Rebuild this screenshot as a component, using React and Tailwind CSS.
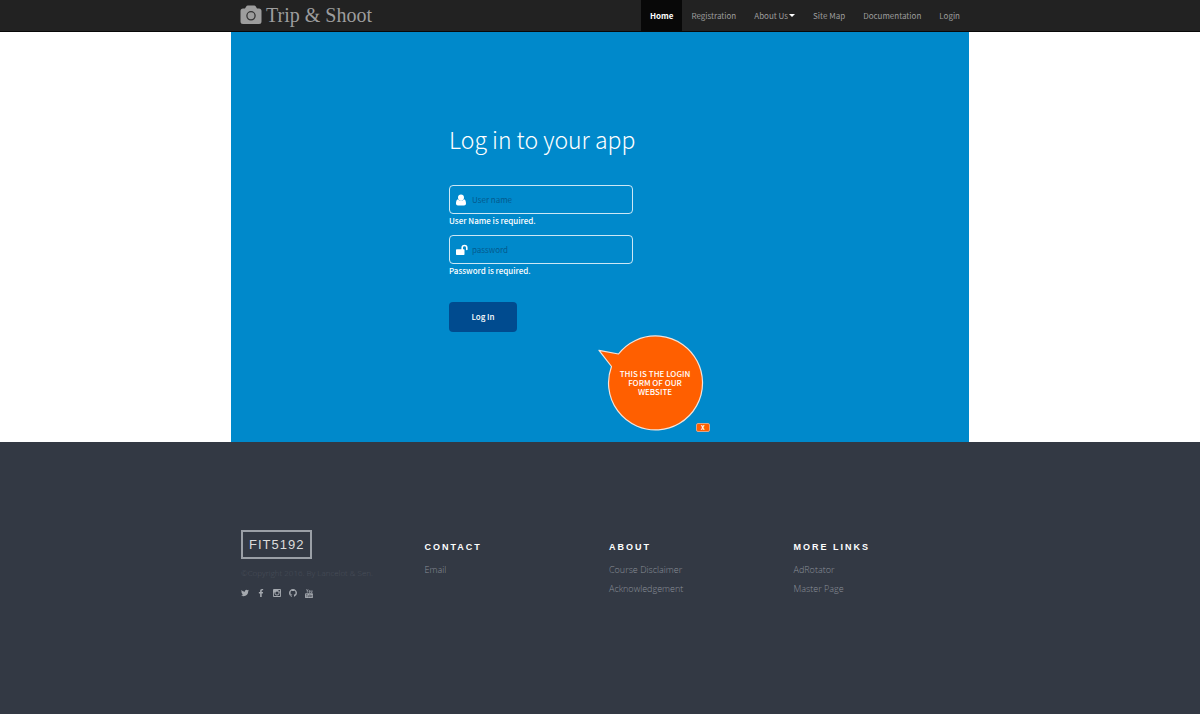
import React from "react";
import { FaTwitter, FaFacebookF } from "react-icons/fa";

const navLinks = ["Registration", "About Us", "Site Map", "Documentation", "Login"];

const columns = [
  { title: "CONTACT", links: ["Email"] },
  { title: "ABOUT", links: ["Course Disclaimer", "Acknowledgement"] },
  { title: "MORE LINKS", links: ["AdRotator", "Master Page"] },
];

function CameraIcon() {
  return (
    <svg viewBox="0 0 22 20" className="h-5 w-[22px]" aria-hidden="true">
      <path fill="#9d9d9d" d="M3 3.500h2L6.200 1.500Q6.700 0.500 7.800 0.500h6.400q1.100 0 1.600 1L17 3.500h2q2.500 0 2.500 2.500v10.500q0 2.500-2.500 2.500H3Q.5 19 .5 16.500V6Q.5 3.500 3 3.500z" />
      <circle cx="11" cy="10.800" r="4.100" fill="none" stroke="#333" strokeWidth="1.300" />
    </svg>
  );
}

function UserIcon() {
  return (
    <svg viewBox="0 0 10 12" className="h-3 w-[10px]" fill="#fff" aria-hidden="true">
      <path d="M5 .5c1.800 0 3 1.300 3 3.100S6.800 7 5 7 2 5.400 2 3.600 3.200.5 5 .5z" />
      <path d="M2 5.200C3.500 7.400 6.500 7.400 8 5.200c1.500.4 2 2.400 2 4.400 0 1.200-.8 1.900-1.900 1.900H1.900C.8 11.500 0 10.800 0 9.600c0-2 .5-4 2-4.400z" />
    </svg>
  );
}

function UnlockIcon() {
  return (
    <svg viewBox="0 0 12 12" className="h-3 w-3" aria-hidden="true">
      <path d="M6.200 6V3.800a2.300 2.300 0 0 1 4.600 0v1.700" fill="none" stroke="#fff" strokeWidth="1.600" strokeLinecap="round" />
      <rect x="0" y="5.200" width="8.500" height="5.800" rx=".7" fill="#fff" />
    </svg>
  );
}

function InstagramIcon() {
  return (
    <svg viewBox="0 0 1536 1536" className="size-2" fill="currentColor" aria-hidden="true">
      <path fillRule="evenodd" d="M178 0h1180q178 0 178 178v1180q0 178-178 178H178Q0 1536 0 1358V178Q0 0 178 0zM1362 1302V650h-136q20 63 20 131 0 190-140 323t-338 133-338-133-140-323q0-68 20-131H170v652q0 60 60 60h1072q60 0 60-60zM768 462a308 300 0 1 0 0 600 308 300 0 1 0 0-600zM1110 170q-66 0-66 66v166q0 66 66 66h184q68 0 68-66V236q0-66-68-66z" />
    </svg>
  );
}

function GithubIcon() {
  return (
    <svg viewBox="0 0 16 16" className="size-2" fill="currentColor" aria-hidden="true">
      <path d="M8 0C3.580 0 0 3.580 0 8c0 3.540 2.290 6.530 5.470 7.590.4.070.55-.17.55-.38 0-.19-.01-.82-.01-1.490-2.010.37-2.530-.49-2.690-.94-.09-.23-.48-.94-.82-1.130-.28-.15-.68-.52-.01-.53.63-.01 1.080.58 1.230.82.72 1.210 1.870.87 2.330.66.07-.52.28-.87.51-1.070-1.780-.2-3.640-.89-3.640-3.950 0-.87.31-1.590.82-2.150-.08-.2-.36-1.020.08-2.120 0 0 .67-.21 2.200.82a7.600 7.600 0 0 1 4 0c1.530-1.040 2.200-.82 2.200-.82.44 1.100.16 1.920.08 2.120.51.56.82 1.270.82 2.150 0 3.070-1.870 3.750-3.650 3.950.29.25.54.73.54 1.480 0 1.070-.01 1.930-.01 2.200 0 .21.15.46.55.38A8 8 0 0 0 16 8c0-4.420-3.580-8-8-8z" />
    </svg>
  );
}

function YoutubeIcon() {
  return (
    <svg viewBox="0 0 14 16" className="h-[9px] w-2" aria-hidden="true">
      <path d="M2.500.5 4 3.500 5.500.5M4 3.500V6.500M7.200 3v3h1.300V3zM10.500 2.500V6h2V2.500" fill="none" stroke="currentColor" strokeWidth="1.300" />
      <rect x="0" y="7.500" width="14" height="8.500" rx="1.500" fill="currentColor" />
      <path d="M1.500 9.500h3M3 9.500v5M5.500 11v3h1.500v-3M8.500 9v5h1.200v-2.800H8.500M12.800 13.800h-1.500v-2.500h1.300v1.200" fill="none" stroke="#333944" strokeWidth=".8" />
    </svg>
  );
}

const socials = [
  { name: "Twitter", icon: <FaTwitter className="size-2" /> },
  { name: "Facebook", icon: <FaFacebookF className="size-2" /> },
  { name: "Instagram", icon: <InstagramIcon /> },
  { name: "GitHub", icon: <GithubIcon /> },
  { name: "YouTube", icon: <YoutubeIcon /> },
];

function Field({ id, type, placeholder, icon, error }) {
  return (
    <div className="mb-2 flex flex-col">
      <div className="relative">
        <span className="pointer-events-none absolute inset-y-0 left-[7px] flex items-center">{icon}</span>
        <input
          id={id}
          type={type}
          placeholder={placeholder}
          aria-label={placeholder}
          aria-describedby={`${id}-error`}
          className="block h-[29px] w-full rounded-[4px] border border-white/80 bg-transparent pr-2 pl-[22px] text-[8px] text-white placeholder:text-[#045a8d] focus:outline-none"
        />
      </div>
      <p id={`${id}-error`} className="text-[8px] leading-[13px] font-medium text-white">{error}</p>
    </div>
  );
}

function SpeechBubble() {
  return (
    <aside className="relative h-[97px] w-[113px]">
      <svg viewBox="0 0 113 97" className="h-full w-full" aria-hidden="true">
        <path d="M1 15.300 20.500 19A47 47 0 1 1 13.500 31.500Z" fill="#ff5f00" stroke="#f3e3da" strokeWidth="1.200" strokeLinejoin="round" />
      </svg>
      <p className="absolute top-[34px] left-[17px] w-20 text-center text-[8px] leading-[9px] font-medium text-white">
        THIS IS THE LOGIN FORM OF OUR WEBSITE
      </p>
      <button type="button" className="absolute right-px bottom-0 flex h-[9px] w-[14px] items-center justify-center rounded-[2px] border border-[#d9a58a] bg-[#ff5f00] text-[6px] leading-[7px] font-bold text-white">
        X
      </button>
    </aside>
  );
}

export default function App() {
  return (
    <div className="flex min-h-screen flex-col bg-white font-['Noto_Sans_CJK_SC',sans-serif]">
      <header className="border-b border-[#080808] bg-[#222]">
        <div className="mx-auto flex h-[31px] max-w-[738px] items-stretch justify-between pl-[9px]">
          <a href="#home" className="flex items-center gap-1 pb-[2px] font-['Liberation_Serif',serif] text-[20px] leading-5 text-[#9d9d9d]">
            <CameraIcon />
            <span>Trip &amp; Shoot</span>
          </a>
          <nav className="flex text-[8px] leading-[31px] text-[#9d9d9d]">
            <a href="#home" className="bg-[#080808] px-[9px] font-bold text-white">Home</a>
            {navLinks.map((label) => (
              <a key={label} href="#nav" className="flex items-center px-[9px]">
                {label}
                {label === "About Us" && (
                  <svg viewBox="0 0 6 3" className="ml-px h-[3px] w-[6px]" fill="#fff" aria-hidden="true">
                    <path d="M0 0h6L3 3z" />
                  </svg>
                )}
              </a>
            ))}
          </nav>
        </div>
      </header>

      <main className="mx-auto w-full max-w-[738px] bg-[#0089cb] pt-[89px] pb-[10px]">
        <form className="mx-auto w-[302px]" onSubmit={(e) => e.preventDefault()}>
          <div className="w-[184px]">
            <h1 className="mb-7 text-[23px] leading-9 font-light whitespace-nowrap text-white">Log in to your app</h1>
            <Field id="username" type="text" placeholder="User name" icon={<UserIcon />} error="User Name is required." />
            <Field id="password" type="password" placeholder="password" icon={<UnlockIcon />} error="Password is required." />
            <button type="submit" className="mt-[25px] block h-[30px] w-[68px] rounded-[4px] bg-[#004b8f] text-[8px] font-medium text-white">Log In</button>
          </div>
        </form>
        <div className="mx-auto mt-[3px] flex w-[222px] justify-end">
          <SpeechBubble />
        </div>
      </main>

      <footer className="flex-1 bg-[#333944] pt-[88px] pb-10">
        <div className="mx-auto grid max-w-[738px] grid-cols-4">
          <div className="pl-[10px]">
            <a href="#unit" className="inline-block border-2 border-[#9ba0a7] px-[6px] font-['Liberation_Sans',sans-serif] text-[13px] leading-[25px] tracking-[1px] text-[#dcdcdc]">FIT5192</a>
            <p className="mt-[6px] font-['Open_Sans',sans-serif] text-[8px] leading-4 font-light whitespace-nowrap text-[#4a505b]">©Copyright 2016. By Lancelot &amp; Sen.</p>
            <div className="mt-2 flex gap-2 text-[#a5a9af]">
              {socials.map((s) => (
                <a key={s.name} href="#social" aria-label={s.name}>{s.icon}</a>
              ))}
            </div>
          </div>
          {columns.map((c) => (
            <section key={c.title} className="pt-[11px] pl-[9px]">
              <h2 className="mb-[7px] font-['Liberation_Sans',sans-serif] text-[9px] leading-3 font-bold tracking-[2px] text-white">{c.title}</h2>
              <ul className="font-['Open_Sans',sans-serif] text-[9px] leading-[19px] font-light text-[#8b9099]">
                {c.links.map((l) => (
                  <li key={l}><a href="#link">{l}</a></li>
                ))}
              </ul>
            </section>
          ))}
        </div>
      </footer>
    </div>
  );
}
